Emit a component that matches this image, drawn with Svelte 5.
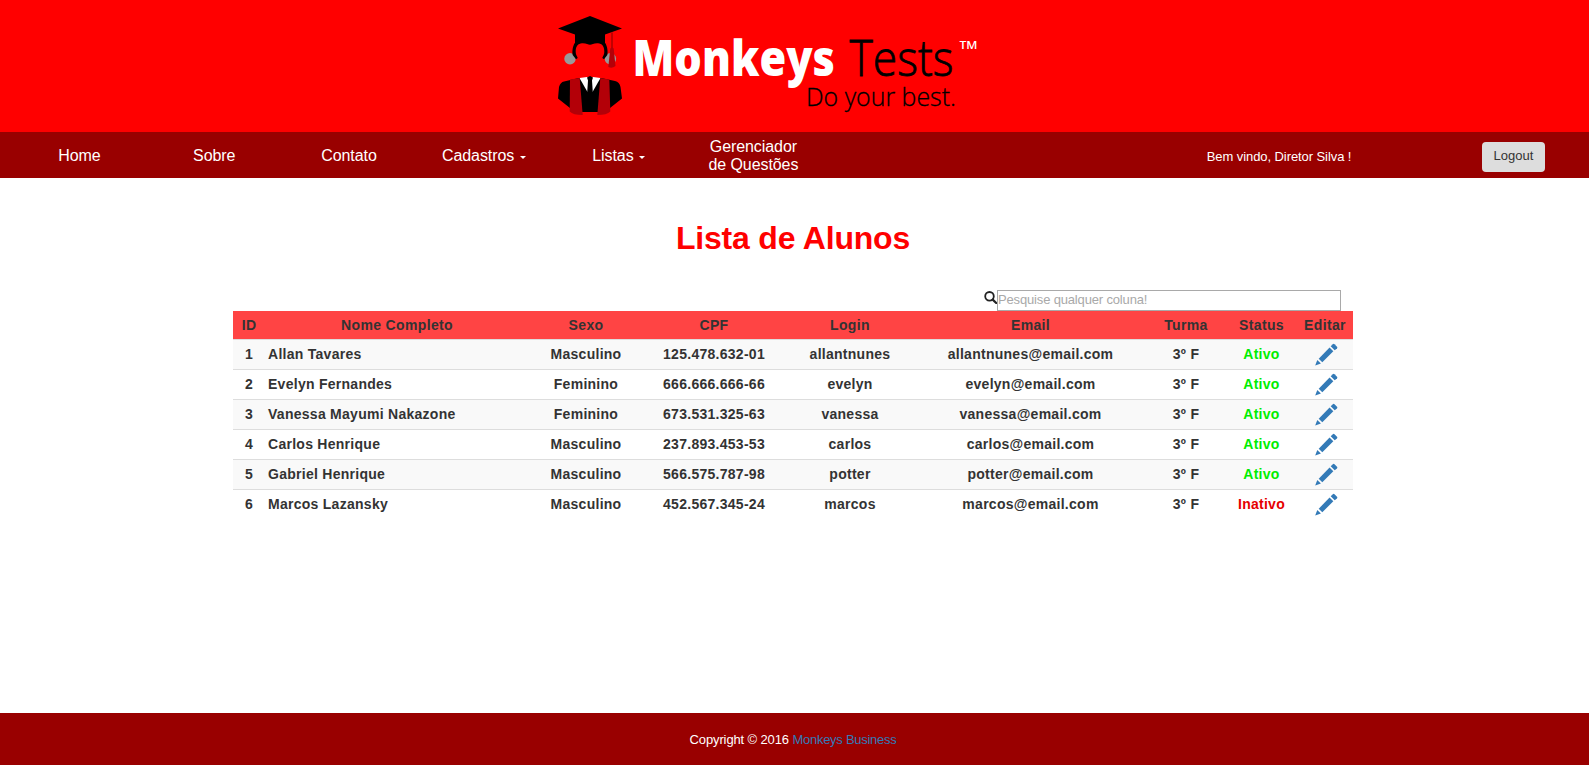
<script>
  const students = [
    { name: 'Allan Tavares', sex: 'Masculino', cpf: '125.478.632-01', login: 'allantnunes', active: true },
    { name: 'Evelyn Fernandes', sex: 'Feminino', cpf: '666.666.666-66', login: 'evelyn', active: true },
    { name: 'Vanessa Mayumi Nakazone', sex: 'Feminino', cpf: '673.531.325-63', login: 'vanessa', active: true },
    { name: 'Carlos Henrique', sex: 'Masculino', cpf: '237.893.453-53', login: 'carlos', active: true },
    { name: 'Gabriel Henrique', sex: 'Masculino', cpf: '566.575.787-98', login: 'potter', active: true },
    { name: 'Marcos Lazansky', sex: 'Masculino', cpf: '452.567.345-24', login: 'marcos', active: false }
  ];
  const columns = ['ID', 'Nome Completo', 'Sexo', 'CPF', 'Login', 'Email', 'Turma', 'Status', 'Editar'];
  const widths = [32, 264, 114, 142, 130, 231, 80, 71, 56];
</script>

<div class="page">
  <header>
    <svg class="logo" viewBox="540 0 450 132" width="450" height="132">
      <circle cx="570" cy="58.8" r="5.7" fill="#999" />
      <circle cx="610.4" cy="58.8" r="5.7" fill="#999" />
      <path d="M558 28.5 L590 16 L622 28.5 L605 34.5 V42.7 C607.5 46 608 52 607.3 55 L604 59.3 L602.3 58 C603 56 604.3 54.5 604.3 52 C604.3 46 602 43.7 598 43.3 C594 43 592 44.7 590 44.7 C588 44.7 586 43 582 43.3 C578 43.7 575.7 46 575.7 52 C575.7 54.5 577 56 577.7 58 L576 59.3 L572.7 55 C572 52 572.5 46 575 42.7 V34.5 Z" fill="#000" />
      <path d="M612 32.5 V48" stroke="#a00000" stroke-width="1.3" />
      <path d="M610.3 48.5 L612 47 L613.7 48.5 L615.5 66 Q612 69 608.3 67 Z" fill="#b30008" />
      <path d="M559 87 Q560.5 82 564 81.5 L579 78 H601 L615 81 Q619.5 82 620.5 87 L622 98.5 L610 108 V110.5 Q606 112 590 112 Q574 112 570 110 V108 L558 98.5 Z" fill="#000" />
      <path d="M579.5 78 L587 77 H593 L600.5 78 L592.5 92 H587.5 Z" fill="#fff" />
      <path d="M587 77.5 L590 76 L593 77.5 L592 80.5 L593.2 98 H586.8 L588 80.5 Z" fill="#000" />
      <path d="M570 79.5 L579.7 78 L582.7 115 Q573 115 569.7 111.5 Z" fill="#b30008" />
      <path d="M600.3 78 L609.3 79.5 L610.3 111.5 Q607 115 597.3 115 Z" fill="#b30008" />
      <text class="bold" x="632.5" y="76" textLength="202.5" lengthAdjust="spacingAndGlyphs">Monkeys</text>
      <text class="light" x="849.5" y="76" textLength="104" lengthAdjust="spacingAndGlyphs">Tests</text>
      <text class="tag" x="806" y="106" textLength="150" lengthAdjust="spacingAndGlyphs">Do your best.</text>
      <text class="tm" x="959.5" y="49" textLength="18" lengthAdjust="spacingAndGlyphs">TM</text>
    </svg>
  </header>

  <nav>
    <div class="menu">
      <span>Home</span>
      <span>Sobre</span>
      <span>Contato</span>
      <span>Cadastros <i class="caret"></i></span>
      <span>Listas <i class="caret"></i></span>
      <span>Gerenciador<br />de Questões</span>
    </div>
    <div class="welcome">Bem vindo, Diretor Silva !</div>
    <button type="button">Logout</button>
  </nav>

  <main>
    <h1>Lista de Alunos</h1>
    <div class="search">
      <svg width="13" height="13" viewBox="0 0 13 13">
        <circle cx="5.5" cy="5.3" r="4.3" fill="none" stroke="#222" stroke-width="1.8" />
        <path d="M8.7 8.7 L12.2 12" stroke="#222" stroke-width="2.3" stroke-linecap="round" />
      </svg>
      <input type="text" placeholder="Pesquise qualquer coluna!" />
    </div>
    <table>
      <colgroup>
        {#each widths as w}<col style="width: {w}px" />{/each}
      </colgroup>
      <thead>
        <tr>{#each columns as c}<th>{c}</th>{/each}</tr>
      </thead>
      <tbody>
        {#each students as s, i}
          <tr>
            <td>{i + 1}</td>
            <td class="name">{s.name}</td>
            <td>{s.sex}</td>
            <td>{s.cpf}</td>
            <td>{s.login}</td>
            <td>{s.login}@email.com</td>
            <td>3º F</td>
            <td class={s.active ? 'on' : 'off'}>{s.active ? 'Ativo' : 'Inativo'}</td>
            <td class="edit">
              <svg width="23" height="23" viewBox="0 0 23 23" fill="#337ab7">
                <path d="M0.2 22.6 L2.3 16.9 L5.9 20.5 Z" />
                <path d="M3.7 15.7 L14.6 4.6 L18.3 8.3 L7.3 19.3 Z" />
                <path d="M15.7 3.3 L17.8 1.2 Q18.6 .4 19.5 1.2 L22 3.7 Q22.8 4.5 22 5.4 L19.7 7.3 Z" />
              </svg>
            </td>
          </tr>
        {/each}
      </tbody>
    </table>
  </main>

  <footer><p><span>Copyright © 2016</span> <a href="#top">Monkeys Business</a></p></footer>
</div>

<style>
  :global(body) { margin: 0; background: #fff; }
  .page {
    display: flex;
    flex-direction: column;
    height: 765px;
    font-family: "Liberation Sans", Arial, sans-serif;
    font-size: 13px;
    color: #333;
  }
  header { height: 132px; background: #f00; padding-left: 540px; }
  .logo { display: block; }
  .logo text { font-family: "Open Sans", "Noto Sans", sans-serif; }
  .logo .bold { font-size: 50px; font-weight: 800; fill: #fff; }
  .logo .light { font-size: 49.5px; font-weight: 300; fill: #000; stroke: #000; stroke-width: 0.8px; }
  .logo .tag { font-size: 25px; font-weight: 300; fill: #000; stroke: #000; stroke-width: 0.3px; }
  .logo .tm { font-size: 11.5px; font-weight: 600; fill: #fff; }
  nav { display: flex; align-items: center; height: 46px; background: #900; color: #fff; }
  .menu {
    display: grid;
    grid-template-columns: repeat(6, 134.8px);
    align-items: center;
    margin-left: 12px;
    padding-top: 2px;
    font-size: 16px;
    letter-spacing: -0.08px;
    line-height: 18px;
    text-align: center;
  }
  .caret {
    display: inline-block;
    margin-left: 1px;
    vertical-align: 2px;
    border-top: 3px solid #fff;
    border-left: 3px solid transparent;
    border-right: 3px solid transparent;
  }
  .welcome { margin-left: 386px; width: 146px; white-space: nowrap; padding-top: 2px; letter-spacing: -0.08px; }
  button {
    margin: 3px 44px 0 auto;
    width: 63px;
    height: 30px;
    padding: 0 0 3px;
    border: 0;
    border-radius: 4px;
    background: #ddd;
    color: #333;
    font: 13px "Liberation Sans", Arial, sans-serif;
  }
  main { flex: 1; padding: 0 236px 0 233px; }
  h1 { margin: 41px 0 0; font-size: 32px; line-height: 38px; color: #f00; text-align: center; letter-spacing: -0.2px; }
  .search { display: flex; justify-content: flex-end; margin: 33px 12px 0 0; }
  .search svg { margin-top: 1px; }
  input {
    box-sizing: border-box;
    width: 344px;
    height: 21px;
    padding: 0 0 2px;
    border: 1px solid #a9a9a9;
    font: 13px "Liberation Sans", Arial, sans-serif;
    letter-spacing: -0.16px;
  }
  input::placeholder { color: #a9a9a9; }
  table {
    width: 1120px;
    table-layout: fixed;
    border-collapse: separate;
    border-spacing: 0;
    font-size: 14px;
    font-weight: 700;
    letter-spacing: 0.27px;
    text-align: center;
  }
  th { height: 28px; padding: 0; background: #f44; letter-spacing: 0.35px; }
  td { box-sizing: border-box; height: 30px; padding: 0 0 2px; border-top: 1px solid #ddd; line-height: 20px; }
  tbody tr:nth-child(odd) { background: #f9f9f9; }
  .name { text-align: left; padding-left: 3px; }
  .on { color: #0e0; }
  .off { color: #e60000; }
  .edit { padding: 0 0 0 2px; }
  .edit svg { display: block; margin: 0 auto; }
  footer { height: 52px; background: #900; color: #fff; text-align: center; }
  p { margin: 19px 3px 0 0; line-height: 15px; }
  p span { letter-spacing: -0.13px; }
  a { color: #337ab7; text-decoration: none; letter-spacing: -0.28px; }
</style>
